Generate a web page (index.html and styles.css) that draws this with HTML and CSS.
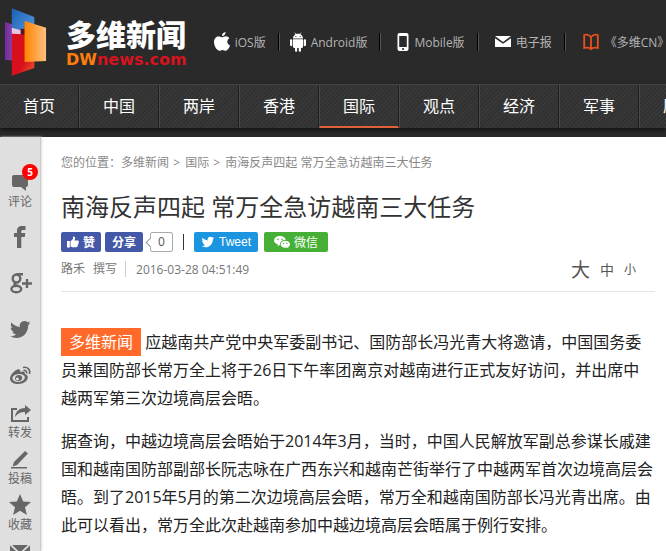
FILE: index.html
```html
<!DOCTYPE html>
<html lang="zh-CN">

  <head>
    <meta charset="utf-8">
    <title>南海反声四起 常万全急访越南三大任务</title>
    <link rel="stylesheet" href="styles.css">
  </head>

  <body>
    <header class="top">
      <a class="logo" href="#">
        <svg class="logo-mark" viewBox="0 0 44 70" aria-hidden="true">
          <defs>
            <linearGradient id="blue" x1="0" y1="0" x2="1" y2="1">
              <stop offset="0" stop-color="#1c5fb4" />
              <stop offset="1" stop-color="#5a9fe0" />
            </linearGradient>
            <linearGradient id="purple" x1="0" y1="0" x2="1" y2="0">
              <stop offset="0" stop-color="#6f2b9c" />
              <stop offset="1" stop-color="#a860b8" />
            </linearGradient>
            <linearGradient id="red" x1="0" y1="0" x2="1" y2="1">
              <stop offset="0" stop-color="#d8101c" />
              <stop offset=".6" stop-color="#d8101c" />
              <stop offset="1" stop-color="#f25a2c" />
            </linearGradient>
            <linearGradient id="orange" x1="0" y1="0" x2="1" y2="0">
              <stop offset="0" stop-color="#ff8300" />
              <stop offset="1" stop-color="#ffc080" />
            </linearGradient>
          </defs>
          <path fill="url(#purple)" d="M0 14l18 6v34L0 53z" />
          <path fill="url(#blue)" d="M7 0l23 9v22L7 23z" />
          <path fill="#e8c5e4" d="M7 20l11 3v5L7 26z" />
          <path fill="url(#red)" d="M7 26l23 1v34L7 69z" />
          <path fill="#5b1622" d="M16 21h5v6h-5z" />
          <path fill="url(#orange)" d="M20 13l22 7v34l-22 1z" />
        </svg>
        <span class="logo-text">
          <span class="logo-cn">多维新闻</span>
          <span class="logo-en"><span class="dw">DW</span>news.com</span>
        </span>
      </a>
      <ul class="apps">
        <li class="tight">
          <a href="#">
            <svg width="16" height="20" viewBox="0 0 16 20" aria-hidden="true"><path fill="#fff" d="M11.6 0c.2 1.8-1.500 4-3.600 4C7.800 2 9.600.2 11.600 0zM8.300 5.300c.8 0 1.900-1 3.600-1 1.500 0 2.800.8 3.500 1.900-3.100 1.900-2.500 6 .6 7.200-.9 2.500-2.500 5.300-4.300 5.300-1.300 0-1.700-.8-3.200-.8s-2 .8-3.200.8C3 18.700 0 14.300 0 10.100c0-3.600 2.300-5.600 4.600-5.600 1.600 0 2.700.8 3.700.8z" /></svg>
            iOS版
          </a>
        </li>
        <li class="tight">
          <a href="#">
            <svg width="16" height="20" viewBox="0 0 16 20" aria-hidden="true"><path fill="#fff" d="M3 6.500C3 4.500 4 3.200 5.400 2.400L4.500.8l.5-.3.900 1.600c1.300-.5 2.900-.5 4.200 0L11 .5l.5.3-.9 1.600C12 3.200 13 4.500 13 6.500zM3 7.200h10v7.600c0 .7-.5 1.200-1.200 1.200H11v2.500c0 1.700-2.200 1.700-2.200 0V16H7.200v2.500c0 1.700-2.200 1.700-2.200 0V16h-.8C3.500 16 3 15.500 3 14.800zM0 8.300c0-1.500 2.300-1.500 2.300 0v4.800c0 1.500-2.300 1.500-2.300 0zM13.700 8.300c0-1.500 2.300-1.500 2.300 0v4.800c0 1.500-2.300 1.500-2.300 0z" /><circle cx="5.800" cy="4.500" r=".6" fill="#2a2a2a" /><circle cx="10.200" cy="4.500" r=".6" fill="#2a2a2a" /></svg>
            Android版
          </a>
        </li>
        <li>
          <a href="#">
            <svg width="12" height="20" viewBox="0 0 12 20" aria-hidden="true"><path fill="#fff" fill-rule="evenodd" d="M2.500 1h7A2 2 0 0 1 11.500 3v14a2 2 0 0 1-2 2h-7a2 2 0 0 1-2-2V3a2 2 0 0 1 2-2zM2.200 4v11h7.600V4zM6 16a1 1 0 1 0 .1 0z" /></svg>
            Mobile版
          </a>
        </li>
        <li>
          <a href="#">
            <svg width="16" height="20" viewBox="0 0 16 20" aria-hidden="true"><path fill="#fff" d="M0 4h16l-8 6zM0 6.200l8 5.600 8-5.600V15H0z" /></svg>
            电子报
          </a>
        </li>
        <li>
          <a href="#">
            <svg width="18" height="20" viewBox="0 0 18 20" aria-hidden="true"><path fill="none" stroke="#e8501c" stroke-width="1.800" d="M9 5v12M9 5C7 2.500 4 2.200 1.500 3M9 5c2-2.500 5-2.800 7.500-2M2.200 3v13C5 15.200 7.500 15.500 9 17.200c1.500-1.700 4-2 6.800-1.200v-13" /></svg>
            《多维CN》月刊
          </a>
        </li>
      </ul>
    </header>

    <nav class="menu">
      <a href="#">首页</a>
      <a href="#">中国</a>
      <a href="#">两岸</a>
      <a href="#">香港</a>
      <a class="active" href="#">国际</a>
      <a href="#">观点</a>
      <a href="#">经济</a>
      <a href="#">军事</a>
      <a href="#">历史</a>
    </nav>

    <div class="page">
      <aside class="side">
        <a class="tool comment" href="#">
          <svg width="24" height="24" viewBox="0 0 24 24" aria-hidden="true"><path d="M6 5h12a2 2 0 0 1 2 2v8a2 2 0 0 1-2 2v4l-5-4H6a2 2 0 0 1-2-2V7a2 2 0 0 1 2-2z" /></svg>
          <span class="badge">5</span>
          评论
        </a>
        <div class="social">
          <a href="#" aria-label="Facebook">
            <svg width="24" height="24" viewBox="0 0 24 24" aria-hidden="true"><path d="M9 23V12H6V8h3V6c0-3.500 2-5 5-5h3.500v4H15c-1.200 0-1.700.5-1.700 1.600V8h4l-.5 4h-3.500v11z" /></svg>
          </a>
          <a href="#" aria-label="Google+">
            <svg width="24" height="24" viewBox="0 0 24 24" aria-hidden="true"><g fill="none" stroke="#666" stroke-width="2.400"><ellipse cx="8.500" cy="7.500" rx="3.800" ry="4" /><ellipse cx="8.300" cy="18" rx="4.900" ry="3.200" /><path d="M8 11.500c-3 1.500-1 2.500 1.500 3.300M8.500 3.300H15M14 12.500h10M19 8v9" /></g></svg>
          </a>
          <a href="#" aria-label="Twitter">
            <svg width="24" height="24" viewBox="0 0 24 24" aria-hidden="true"><path d="M22.500 6l-2.300 2.200C20.300 15.500 15 21 8.500 21c-2.400 0-4.600-.7-6.500-1.900 2.200.2 4.400-.4 6.100-1.700-1.800 0-3.300-1.200-3.800-2.800h1.800C4.200 14.200 2.800 12.500 2.800 10.500l1.800.5C2.900 9.800 2.300 7.500 3.400 5.600c2.100 2.500 5.100 4.100 8.500 4.300C11.200 6.800 13.300 4 16.400 4c1.200 0 2.300.5 3 1.300l2.600-1-1.700 2.300z" /></svg>
          </a>
          <a href="#" aria-label="微博">
            <svg width="24" height="24" viewBox="0 0 24 24" aria-hidden="true"><path fill-rule="evenodd" d="M9.500 6.500c2-.7 3.200.4 2.600 2.600 3-1.200 5.600-.6 4.700 2 2 .7 3 1.800 3 3.400 0 3.200-4.200 6.500-9.400 6.500S2 18.600 2 15.400c0-3 4-7.800 7.500-8.900zM10.500 11c-3.700.3-6.200 2.300-6 4.600s3 3.800 6.500 3.400 6-2.500 5.800-4.700-2.600-3.600-6.300-3.300z" /><path fill-rule="evenodd" d="M10.500 12c2.600-.1 4 1.500 3.700 3.300-.3 1.900-2.200 3-4.100 3s-3.300-1.200-3.100-3c.2-1.700 1.600-3.200 3.500-3.300zM9.300 14.500a1.500 1.500 0 1 0 .1 0z" /><path fill="none" stroke="#666" stroke-width="1.600" d="M15 4.500c4.500-1 7.500 2 6.500 6.500M15.500 7.500c2.200-.5 3.600.8 3.100 3" /></svg>
          </a>
        </div>
        <div class="tools">
          <a class="tool" href="#">
            <svg width="24" height="24" viewBox="0 0 24 24" aria-hidden="true"><path fill="none" stroke="#666" stroke-width="2" d="M9 8H4v12h16v-4" /><path d="M7 16c.5-6 5-9 10-9V4l6 5-6 5v-3c-4 0-7 1-10 5z" /></svg>
            转发
          </a>
          <a class="tool" href="#">
            <svg width="24" height="24" viewBox="0 0 24 24" aria-hidden="true"><path d="M17 4l3 2.500L9 18l-4.500 1.500L6 15zM3 20h16v1.500H3z" /></svg>
            投稿
          </a>
          <a class="tool" href="#">
            <svg width="24" height="24" viewBox="0 0 24 24" aria-hidden="true"><path d="M12 1l3.200 7.400 7.800.7-6 5.200 1.900 7.700-6.900-4.200L5.100 22 7 14.300 1 9.100l7.800-.7z" /></svg>
            收藏
          </a>
          <a class="tool" href="#">
            <svg width="24" height="24" viewBox="0 0 24 24" aria-hidden="true"><path d="M2 6.500l7 6.500-7 6zM22 6.500L15 13l7 6zM4 6h16l-8 7.500zM3 20l7-6 2 2 2-2 7 6z" /></svg>
            邮件
          </a>
        </div>
      </aside>

      <main class="article">
        <nav class="crumbs">您的位置：<a href="#">多维新闻</a> <span>&gt;</span> <a href="#">国际</a> <span>&gt;</span> 南海反声四起 常万全急访越南三大任务</nav>
        <h1>南海反声四起 常万全急访越南三大任务</h1>

        <div class="share">
          <button class="fb">
            <svg width="12" height="12" viewBox="0 0 12 12" aria-hidden="true"><path fill="#fff" d="M0 5h2.800v6.500H0zM3.500 5.500L6 2.800V.5c1.700-.3 2.500 1 2 2.500l-.5 1.500H11c1.200.3 1.200 1.500.4 2 .5.600.3 1.400-.3 1.700.3.700 0 1.300-.6 1.500.2 1-.3 1.600-1.300 1.600H6c-1 0-1.500-.5-2.500-.8z" /></svg>
            赞
          </button>
          <button class="fb">分享</button>
          <span class="count">0</span>
          <span class="bar"></span>
          <button class="tweet">
            <svg width="14" height="14" viewBox="1 2 23 21" aria-hidden="true"><path fill="#fff" d="M23 6l-2.500 2.200C20.500 15.500 15 21 8.500 21c-2.400 0-4.600-.7-6.500-1.900 2.200.2 4.400-.4 6.100-1.700-1.800 0-3.300-1.200-3.800-2.800h1.800C4.200 14.200 2.800 12.500 2.800 10.500l1.800.5C2.900 9.800 2.300 7.500 3.400 5.600c2.100 2.500 5.100 4.100 8.500 4.300C11.200 6.800 13.300 4 16.400 4c1.200 0 2.300.5 3 1.300l2.600-1-1.700 2.300z" /></svg>
            Tweet
          </button>
          <button class="wechat">
            <svg width="16" height="14" viewBox="0 0 16 14" aria-hidden="true"><path fill="#fff" d="M6 1c3.200 0 5.500 1.800 5.800 4C8.500 4.800 5.500 6.800 6 10l-2.500 1 .3-1.700C1.500 8.500 0 7.200 0 5.400 0 3 2.600 1 6 1z" /><path fill="#fff" d="M11.300 5.800c2.700 0 4.700 1.600 4.700 3.500 0 1.200-.8 2.200-1.800 2.800l.3 1.400-1.600-.9c-3.400.8-6.300-.9-6.300-3.300 0-2 2-3.500 4.700-3.500z" /><g fill="#45b035"><circle cx="4" cy="4.200" r=".8" /><circle cx="8" cy="4.200" r=".8" /><circle cx="9.700" cy="8.400" r=".7" /><circle cx="12.900" cy="8.400" r=".7" /></g></svg>
            微信
          </button>
        </div>

        <div class="meta">
          <span class="author"><span>路禾</span><span>撰写</span></span>
          <time datetime="2016-03-28T04:51:49">2016-03-28 04:51:49</time>
          <div class="sizes">
            <button class="big">大</button>
            <button class="mid">中</button>
            <button class="small">小</button>
          </div>
        </div>

        <p><span class="tag">多维新闻</span> 应越南共产党中央军委副书记、国防部长冯光青大将邀请，中国国务委员兼国防部长常万全上将于26日下午率团离京对越南进行正式友好访问，并出席中越两军第三次边境高层会晤。</p>
        <p>据查询，中越边境高层会晤始于2014年3月，当时，中国人民解放军副总参谋长戚建国和越南国防部副部长阮志咏在广西东兴和越南芒街举行了中越两军首次边境高层会晤。到了2015年5月的第二次边境高层会晤，常万全和越南国防部长冯光青出席。由此可以看出，常万全此次赴越南参加中越边境高层会晤属于例行安排。</p>
      </main>
    </div>
  </body>

</html>
```
FILE: styles.css
```css
* {
  box-sizing: border-box;
}

body {
  margin: 0;
  height: 100vh;
  display: flex;
  flex-direction: column;
  overflow: hidden;
  background-color: #2a2a2a;
  font-family: "Open Sans", "Noto Sans CJK SC", sans-serif;
  font-size: 12px;
  color: #333;
}

a {
  color: inherit;
  text-decoration: none;
}

button {
  border: none;
  padding: 0;
  background: none;
  font-family: inherit;
  cursor: pointer;
}

/* header */
.top {
  display: flex;
  flex-shrink: 0;
  height: 84px;
}

.logo {
  display: flex;
  flex-shrink: 0;
  gap: 18px;
  padding: 8px 17px 0 5px;
}

.logo-mark {
  width: 43px;
  height: 69px;
}

.logo-text {
  display: flex;
  flex-direction: column;
  padding-top: 10px;
}

.logo-cn {
  font-size: 30px;
  font-weight: 900;
  line-height: 34px;
  color: #fff;
}

.logo-en {
  font-family: "DejaVu Sans", sans-serif;
  font-size: 16px;
  font-weight: bold;
  line-height: 16px;
  color: #d7141e;
}

.dw {
  color: #ff7d0a;
}

.apps {
  display: flex;
  margin: 0;
  padding: 33px 0 0;
  list-style: none;
  white-space: nowrap;
  color: #b4b4b4;
}

.apps a {
  display: flex;
  align-items: center;
  gap: 5px;
  height: 18px;
  padding: 0 13px 0 16px;
}

.apps .tight a {
  padding-left: 10px;
}

.apps li + li {
  border-left: 1px solid #555;
  box-shadow: -1px 0 #000;
  height: 18px;
}

/* main menu */
.menu {
  display: flex;
  flex-shrink: 0;
  height: 44px;
  margin-bottom: 9px;
  border-top: 1px solid #444;
  background: repeating-linear-gradient(135deg, #303030 0 1px, #393939 2px 3px);
  box-shadow: 0 2px 4px #111;
}

.menu a {
  flex: 0 0 80px;
  border-left: 1px solid #4a4a4a;
  border-right: 1px solid #1e1e1e;
  font-size: 16px;
  line-height: 43px;
  text-align: center;
  color: #fff;
}

.menu a:first-child {
  flex-basis: 79px;
  border-left: none;
}

.menu .active {
  border-bottom: 2px solid #e0603c;
}

.page {
  display: flex;
  flex: 1;
  min-height: 0;
  background-color: #fff;
}

/* left toolbar */
.side {
  display: flex;
  flex-direction: column;
  flex: 0 0 41px;
  padding-top: 33px;
  background-color: #dfdfdf;
  border-right: 1px solid #ccc;
  box-shadow: 1px 0 2px #ddd;
  color: #666;
}

.side svg {
  display: block;
  margin: 0 auto;
  fill: #666;
}

.tool {
  position: relative;
  display: block;
  line-height: 16px;
  text-align: center;
}

.badge {
  position: absolute;
  top: -6px;
  right: 2px;
  width: 16px;
  height: 16px;
  border-radius: 50%;
  background-color: #f00;
  font-size: 10px;
  font-weight: bold;
  color: #fff;
}

.social {
  display: grid;
  gap: 22px;
  padding: 15px 0 14px;
}

.tools {
  display: grid;
  gap: 6px;
}

/* article */
.article {
  flex: 1;
  padding: 16px 11px 0 20px;
}

.crumbs {
  line-height: 20px;
  color: #888;
}

.crumbs span {
  margin: 0 2px 0 1px;
}

h1 {
  margin: 15px 0 6px;
  font-size: 24px;
  font-weight: normal;
  line-height: 38px;
}

.share {
  display: flex;
  align-items: center;
  gap: 4px;
}

.share button {
  display: flex;
  align-items: center;
  justify-content: center;
  gap: 4px;
  height: 20px;
  border-radius: 2px;
  font-size: 12px;
  color: #fff;
}

.share .fb {
  min-width: 38px;
  padding: 0 5px;
  background-color: #4458a8;
  font-weight: bold;
}

.share .fb:first-child {
  min-width: 40px;
}

.share .tweet {
  width: 64px;
  margin-right: 2px;
  background-color: #1b95e0;
  font-family: "Liberation Sans", sans-serif;
}

.share .wechat {
  width: 64px;
  background-color: #45b035;
}

.count {
  position: relative;
  width: 23px;
  height: 20px;
  margin-left: 3px;
  border: 1px solid #aaa;
  border-radius: 2px;
  line-height: 18px;
  text-align: center;
  color: #555;
}

/* arrow of the bubble */
.count:before {
  content: "";
  position: absolute;
  left: -4px;
  top: 6px;
  width: 6px;
  height: 6px;
  border-left: 1px solid #999;
  border-bottom: 1px solid #999;
  background-color: #fff;
  transform: rotate(45deg);
}

.bar {
  width: 1px;
  height: 16px;
  margin: 0 6px;
  background-color: #333;
}

.meta {
  display: flex;
  align-items: center;
  height: 40px;
  margin-bottom: 36px;
  padding-bottom: 5px;
  border-bottom: 1px solid #e5e5e5;
  color: #777;
}

.author {
  display: flex;
  gap: 8px;
  padding-right: 8px;
  margin-right: 10px;
  border-right: 1px solid #ccc;
  line-height: 16px;
}

.sizes {
  display: flex;
  align-items: center;
  gap: 10px;
  margin-left: auto;
  padding-right: 19px;
}

.sizes button {
  color: #555;
}

.big {
  font-size: 19px;
}

.mid {
  font-size: 14px;
}

.small {
  font-size: 12px;
}

p {
  margin: 0 0 15px;
  font-size: 16px;
  line-height: 28px;
  color: #222;
}

.tag {
  display: inline-block;
  padding: 0 8px;
  background-color: #ff6a2a;
  color: #fff;
}
```
